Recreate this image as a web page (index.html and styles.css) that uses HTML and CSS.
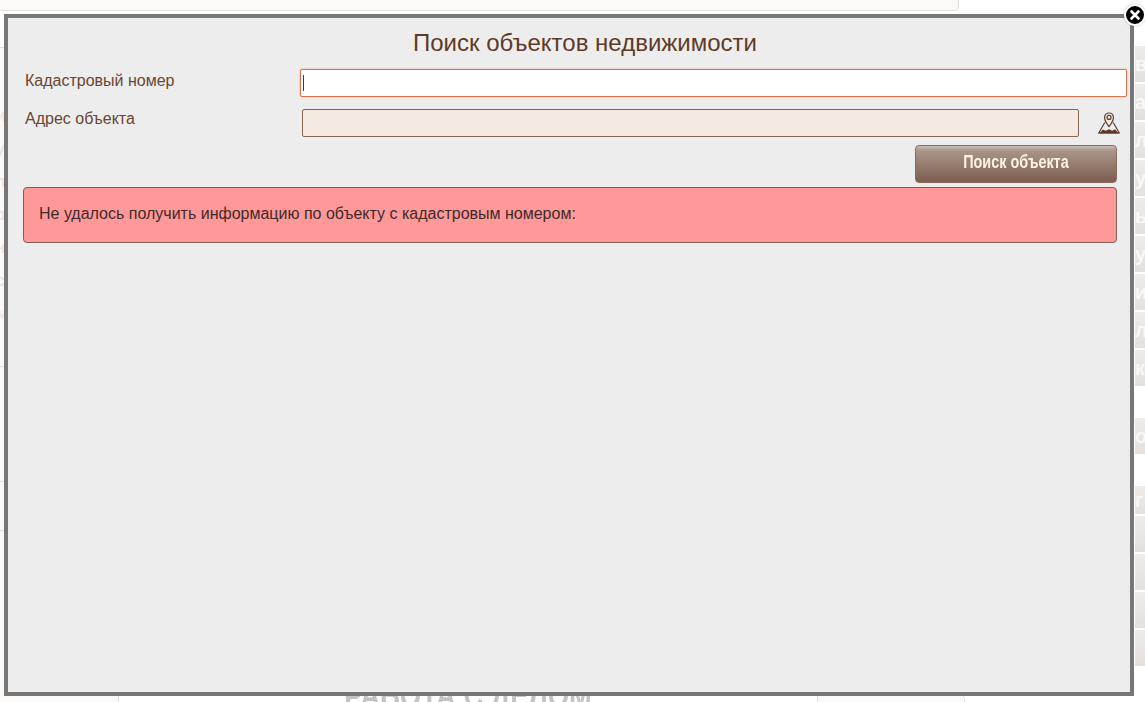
FILE: index.html
```html
<!DOCTYPE html>
<html lang="ru">
<head>
<meta charset="utf-8">
<title>Поиск объектов недвижимости</title>
<link rel="stylesheet" href="styles.css">
</head>
<body>
<div class="page">
  <div class="topbar"></div>
  <div class="page-main">
    <aside class="left-col">
      <div class="left-text">и</div>
      <div class="left-text">у</div>
      <div class="left-text">п</div>
      <div class="left-text">р</div>
      <div class="left-text">н</div>
      <div class="left-text">с</div>
      <div class="left-text">м</div>
      <div class="left-rule rule-a"></div>
      <div class="left-rule rule-b"></div>
      <div class="left-rule rule-c"></div>
    </aside>
    <main class="centre">
      <div class="centre-title"><span class="narrow-title">РАБОТА С ДЕЛОМ</span></div>
    </main>
    <aside class="mid-col"></aside>
    <nav class="right-col">
      <div class="tab">в</div>
      <div class="tab">а</div>
      <div class="tab">л</div>
      <div class="tab">у</div>
      <div class="tab">ы</div>
      <div class="tab">у</div>
      <div class="tab">и</div>
      <div class="tab">л</div>
      <div class="tab">к</div>
      <div class="tab tab-gap">о</div>
      <div class="tab tab-short tab-gap">г</div>
      <div class="tab"></div>
      <div class="tab"></div>
      <div class="tab"></div>
      <div class="tab"></div>
    </nav>
  </div>
</div>

<div class="modal">
  <h1 class="modal-title">Поиск объектов недвижимости</h1>
  <div class="row row-cadastre">
    <label class="label">Кадастровый номер</label>
    <div class="fake-input"><span class="caret"></span></div>
  </div>
  <div class="row row-address">
    <label class="label">Адрес объекта</label>
    <div class="addr-input"></div>
    <svg class="map-icon" viewBox="0 0 24 24" aria-hidden="true">
      <path class="map-line" d="M12 15.500C9.600 12.600 7.600 9.900 7.600 6.400a4.400 4.400 0 0 1 8.800 0c0 3.500-2 6.200-4.400 9.100z"/>
      <circle class="map-line" cx="12" cy="6.400" r="2"/>
      <path class="map-line" d="M7.800 11.500 1.800 21.800h20.400l-6-10.300"/>
      <path class="map-fill" d="M2.200 22.500l3.600-4 3 1.300 3.200-1.600 3.400 1.600 2.600-1.500 3.800 4.200z"/>
    </svg>
  </div>
  <div class="actions">
    <button class="search-btn" type="button"><span class="narrow-label">Поиск объекта</span></button>
  </div>
  <div class="alert">Не удалось получить информацию по объекту с кадастровым номером:</div>
  <div class="close" aria-label="Закрыть">
    <svg class="close-x" viewBox="0 0 12 12" aria-hidden="true"><path d="M2.500 2.500l7 7M9.500 2.500l-7 7"/></svg>
  </div>
</div>
</body>
</html>
```
FILE: styles.css
```css
* { box-sizing: border-box; }
html, body { margin: 0; height: 100%; }
body {
  width: 1145px;
  height: 702px;
  overflow: hidden;
  background: #fff;
  font-family: "Liberation Sans", Arial, sans-serif;
  position: relative;
}

/* Page behind the modal */
.page { display: flex; flex-direction: column; height: 702px; }
.topbar {
  width: 959px;
  height: 11px;
  flex: none;
  background: #fbf9f7;
  border: 1px solid #e2e0de;
  border-width: 0 1px 1px 0;
  border-bottom-right-radius: 5px;
}
.page-main { display: flex; flex: 1; min-height: 0; }
.left-col {
  width: 119px;
  flex: none;
  margin-top: 36px;
  padding-top: 51px;
  background: #fbf9f7;
  border-top: 1px solid #e2e0de;
  border-right: 1px solid #e2e0de;
  overflow: hidden;
}
.left-text {
  height: 33px;
  color: #ece5e3;
  font-size: 16px;
  line-height: 33px;
  font-weight: bold;
  margin-left: -4px;
}
.left-rule { height: 1px; background: #e2e0de; }
.rule-a { margin-top: 36px; }
.rule-b { margin-top: 114px; }
.rule-c { margin-top: 48px; }
.centre { width: 698px; flex: none; display: flex; align-items: flex-end; justify-content: center; }
.centre-title {
  margin-bottom: -12px;
  color: #c4c4c4;
  font-size: 33px;
  line-height: 36px;
  font-weight: bold;
  white-space: nowrap;
}
.narrow-title { display: inline-block; transform: scaleX(.83); }
.mid-col {
  width: 148px;
  height: 7px;
  flex: none;
  align-self: flex-end;
  background: #fbf9f7;
  border-left: 1px solid #e2e0de;
  border-right: 1px solid #e2e0de;
  border-top-right-radius: 5px;
}
.right-col {
  margin-left: 170px;
  flex: none;
  width: 20px;
  padding-top: 35px;
  display: flex;
  flex-direction: column;
  gap: 2px;
}
.tab {
  width: 20px;
  height: 36px;
  flex: none;
  background: linear-gradient(#efebe8, #e5e0dc);
  color: #faf7f5;
  font-size: 20px;
  font-weight: bold;
  line-height: 36px;
  overflow: hidden;
  filter: blur(.5px);
}
.tab-gap { margin-top: 30px; }
.tab-short { height: 28px; line-height: 28px; }

/* Modal */
.modal {
  position: absolute;
  left: 4px;
  top: 14px;
  width: 1130px;
  height: 682px;
  padding: 12px 3px 0 15px;
  background: #ededed;
  border: 4px solid #777;
  color: #5f3a26;
}
.modal-title {
  margin: 0 0 13px;
  height: 26px;
  padding-left: 20px;
  font-size: 24px;
  line-height: 26px;
  font-weight: normal;
  text-align: center;
  color: #5f3a26;
}
.row { display: flex; }
.row-cadastre { height: 28px; margin-bottom: 12px; }
.row-address { height: 28px; margin-bottom: 8px; }
.label {
  width: 277px;
  flex: none;
  padding-left: 2px;
  font-size: 16px;
  line-height: 24px;
  color: #6b452f;
}
.row-address .label { width: 279px; line-height: 19px; }
.fake-input {
  width: 827px;
  height: 28px;
  padding: 5px 2px;
  background: #fff;
  border: 1px solid #cf7650;
  border-radius: 2px;
  box-shadow: 0 0 2px #e8a888;
}
.caret { display: block; width: 1px; height: 16px; background: #5a3321; }
.addr-input {
  width: 777px;
  height: 28px;
  background: #f3e9e1;
  border: 1px solid #8a6654;
  border-radius: 2px;
}
.map-icon { width: 24px; height: 24px; margin: 2px 0 0 18px; flex: none; }
.map-line { fill: none; stroke: #5f3a26; stroke-width: 1.200; }
.map-fill { fill: #5f3a26; }
.actions { display: flex; justify-content: flex-end; padding-right: 10px; }
.search-btn {
  width: 202px;
  height: 38px;
  padding: 0 0 5px;
  background: linear-gradient(#c9bdb6 0, #a89488 14%, #7d5e50 100%);
  border: 1px solid #8a6a5b;
  border-radius: 4px;
  color: #fff3df;
  font-family: "Liberation Sans", sans-serif;
  font-size: 18px;
  font-weight: bold;
  line-height: 24px;
}
.narrow-label { display: inline-block; transform: scaleX(.8); }
.alert {
  width: 1094px;
  height: 56px;
  margin-top: 4px;
  padding: 16px 15px 0;
  background: #ff9999;
  border: 1px solid #7f5d50;
  border-radius: 4px;
  color: #3f2a2a;
  font-size: 16px;
  line-height: 20px;
}
.close {
  position: absolute;
  top: -14px;
  right: -16px;
  width: 22px;
  height: 22px;
  display: flex;
  align-items: center;
  justify-content: center;
  background: #000;
  border: 2px solid #fff;
  border-radius: 50%;
  box-shadow: 0 0 2px rgba(0,0,0,.3);
}
.close-x { width: 12px; height: 12px; }
.close-x path { fill: none; stroke: #fff; stroke-width: 2.600; stroke-linecap: round; }
```
